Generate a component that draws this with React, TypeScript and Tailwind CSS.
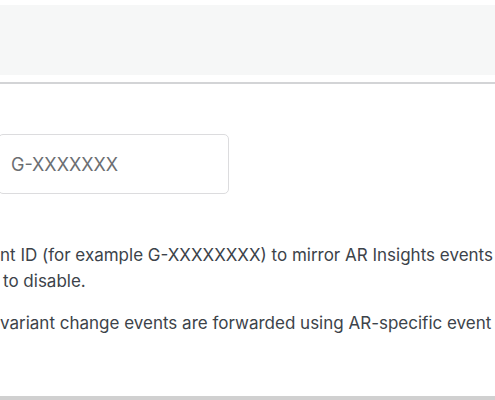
export default function App() {
  return (
    <div
      className="relative flex h-[400px] w-[495px] flex-col overflow-hidden bg-white"
      style={{ fontFamily: 'Inter, "Noto Sans", sans-serif' }}
    >
      <div className="mt-[5px] h-[70px] w-full bg-[#f6f7f7]" />
      <div className="mt-[7px] h-[2px] w-full bg-[#d3d4d6]" />

      <div className="mt-[50px] ml-[-2px] flex h-[60px] w-[231px] items-center rounded-[5px] border border-[#dcdcde] pl-[12px] text-[18px] text-[#6b6e72]">
        G-XXXXXXX
      </div>

      <div className="mt-[48px] whitespace-nowrap text-[17px] leading-[26px] text-[#3c434a]">
        <p>nt ID (for example G-XXXXXXXX) to mirror AR Insights events</p>
        <p className="ml-[3px]">to disable.</p>
        <p className="mt-[16px]">variant change events are forwarded using AR-specific event names.</p>
      </div>

      <div className="mt-auto h-[4px] w-full bg-[#d0d0d0]" />
    </div>
  );
}
